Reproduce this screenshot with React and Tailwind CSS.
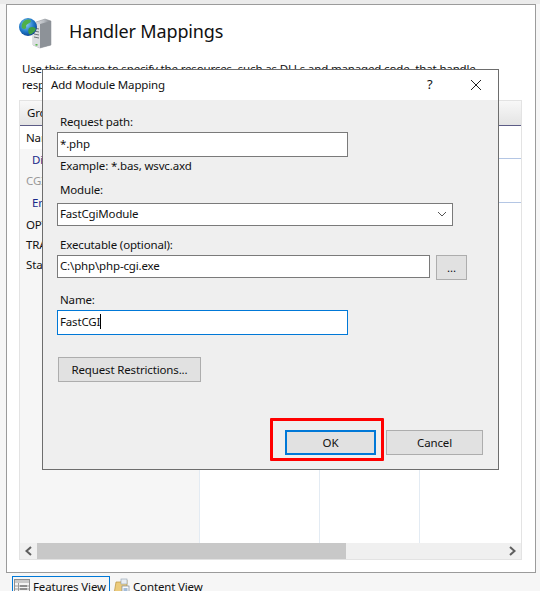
const font = { fontFamily: '"Noto Sans", sans-serif' };

function ServerGlobe() {
  return (
    <svg width="36" height="36" viewBox="0 0 36 36" className="shrink-0 -ml-[1px]">
      <defs>
        <linearGradient id="srv" x1="0" x2="1" y1="0" y2="0">
          <stop offset="0" stopColor="#e8e8ea" />
          <stop offset="0.6" stopColor="#b8bcc2" />
          <stop offset="1" stopColor="#7d8288" />
        </linearGradient>
        <radialGradient id="glb" cx="0.4" cy="0.35" r="0.7">
          <stop offset="0" stopColor="#8fd0f5" />
          <stop offset="0.6" stopColor="#1f78c8" />
          <stop offset="1" stopColor="#0c3f8a" />
        </radialGradient>
      </defs>
      <path d="M15 7 L27 3 L33 5 L33 29 L22 32 L15 29 Z" fill="url(#srv)" stroke="#8a8f95" strokeWidth="0.5" />
      <path d="M22 8 L33 5 L33 29 L22 32 Z" fill="#8d9298" />
      <path d="M15 7 L22 8 V32 L15 29 Z" fill="#dcdee2" />
      <path d="M16 12 L21 13 M16 15 L21 16 M16 18 L21 19 M16 21 L21 22" stroke="#6f7479" strokeWidth="1" />
      <rect x="17.5" y="28" width="2" height="1.6" fill="#58b848" />
      <circle cx="10" cy="11" r="9" fill="url(#glb)" />
      <path d="M5 6 C8 3 12 3 13 5 C12 8 9 7 8 10 C9 13 6 14 4 12 C3 10 4 8 5 6 Z" fill="#4fb04a" />
      <path d="M11 12 C14 10 17 11 18 13 C16 17 13 19 11 18 C10 16 10 14 11 12 Z" fill="#3f9f42" />
    </svg>
  );
}

function GridIcon() {
  return (
    <svg width="16" height="16" viewBox="0 0 16 16" className="shrink-0">
      <rect x="0.5" y="0.5" width="15" height="15" fill="#f4f4f4" stroke="#8f8f8f" />
      <rect x="1" y="1" width="14" height="3" fill="#c9c9c9" />
      <path d="M4.5 4V15M1 7H15M1 10H15M1 13H15" stroke="#9a9a9a" />
      <path d="M6 7H13M6 10H13M6 13H13" stroke="#555" />
    </svg>
  );
}

function FolderIcon() {
  return (
    <svg width="17" height="17" viewBox="0 0 17 17" className="shrink-0">
      <path d="M1 16 L3 4 H8 L9 2 H14 V16 Z" fill="#eccb7c" stroke="#b89440" strokeWidth="0.7" />
      <rect x="8" y="1" width="6" height="5" fill="#e9edf2" stroke="#8fa0b0" strokeWidth="0.6" />
      <rect x="9" y="8" width="7" height="8.5" fill="#fafafa" stroke="#7b8894" strokeWidth="0.7" />
      <path d="M10.5 11H14.5M10.5 13H14.5" stroke="#4e80b8" />
    </svg>
  );
}

function Field({ label, value, width, caret, focused }) {
  return (
    <div className="flex flex-col">
      <label className="pl-[3px] h-[17px] leading-[17px]">{label}</label>
      <div
        className={`mt-[2px] flex items-center bg-white pl-[2px] pb-[2px] ${focused ? "border border-[#0078d7]" : "border border-[#7a7a7a]"} ${width}`}
      >
        <span>{value}</span>
        {caret && <span className="inline-block w-px h-[15px] bg-black" />}
      </div>
    </div>
  );
}

function Chevron({ dir }) {
  return (
    <svg width="9" height="10" viewBox="0 0 9 10">
      <path d={dir === "l" ? "M7 1 L2.5 5 L7 9" : "M2 1 L6.5 5 L2 9"} fill="none" stroke="#5f5f5f" strokeWidth="2" />
    </svg>
  );
}

export default function App() {
  return (
    <div className="relative w-[540px] h-[591px] overflow-hidden bg-[#f6f6f6] text-[11.5px] tracking-[-0.15px] text-[#111]" style={font}>
      <div className="h-[4px] bg-[#ebebeb]" />
      <div className="ml-[6px] w-[530px] h-[569px] border border-[#9b9b9b] bg-white flex flex-col px-[12px]">
        <div className="flex items-start h-[50px] pt-[11px]">
          <ServerGlobe />
          <h1 className="ml-[15px] text-[18px] leading-[30px] font-normal tracking-[-0.15px]">Handler Mappings</h1>
        </div>
        <div className="h-[45px] pt-[6px] pl-[3px] leading-[16px] whitespace-nowrap">
          <p>Use this feature to specify the resources, such as DLLs and managed code, that handle</p>
          <p>responses to particular request types.</p>
        </div>
        <div className="w-[503px] h-[460px] border border-[#e3e3e3] flex flex-col">
          <div className="h-[25px] shrink-0 flex items-center pl-[7px] bg-gradient-to-b from-[#f8f8f8] to-[#e4e4e4] border-b border-[#5c5c86]">
            Group by
          </div>
          <div className="flex-1 flex min-h-0">
            <div className="w-[180px] bg-[#f6f6f6] border-r border-[#e3ebf3]">
              <div className="bg-white h-[23px] leading-[23px] pl-[6px]">Name</div>
              <div className="h-[21px] leading-[21px] pl-[12px] text-[#1a2a8a]">Disabled</div>
              <div className="h-[22px] leading-[22px] pl-[6px] text-[#999]">CGI-exe</div>
              <div className="h-[22px] leading-[22px] pl-[12px] text-[#1a2a8a]">Enabled</div>
              <div className="h-[21px] leading-[21px] pl-[6px]">OPTIONSVerbHandler</div>
              <div className="h-[20px] leading-[20px] pl-[6px]">TRACEVerbHandler</div>
              <div className="h-[19px] leading-[19px] pl-[6px]">StaticFile</div>
            </div>
            <div className="flex-1 flex flex-col relative">
              <div className="h-[33px] border-b border-[#b4c6e4]" />
              <div className="h-[44px] border-b border-[#b4c6e4]" />
              <div className="flex-1 flex">
                <div className="w-[120px] border-r border-[#e3ebf3]" />
                <div className="w-[100px] border-r border-[#e3ebf3]" />
              </div>
            </div>
          </div>
          <div className="h-[16px] shrink-0 flex bg-[#f0f0f0] items-center">
            <div className="w-[17px] flex justify-center"><Chevron dir="l" /></div>
            <div className="w-[309px] h-full bg-[#c8c8c8]" />
            <div className="flex-1" />
            <div className="w-[17px] flex justify-center"><Chevron dir="r" /></div>
          </div>
        </div>
      </div>
      <div className="ml-[12px] mt-[3px] flex items-start">
        <div className="w-[98px] h-[20px] border border-[#0078d7] border-b-0 flex items-center gap-[3px] pl-[1px] pt-[1px] whitespace-nowrap">
          <GridIcon />
          <span>Features View</span>
        </div>
        <div className="ml-[3px] flex items-center gap-[3px] h-[20px] pt-[1px] whitespace-nowrap">
          <FolderIcon />
          <span>Content View</span>
        </div>
      </div>

      {/* Modal dialog */}
      <div className="absolute left-[42px] top-[69px] w-[457px] h-[401px] border border-[#6d6d6d] bg-[#efefef] flex flex-col">
        <div className="h-[30px] shrink-0 bg-white flex items-center pl-[8px]">
          <span className="flex-1">Add Module Mapping</span>
          <span className="w-[12px] mr-[31px] ml-[1px] text-[13px]">?</span>
          <svg width="12" height="12" viewBox="0 0 12 12" className="mr-[16px]">
            <path d="M1 1 L11 11 M11 1 L1 11" stroke="#222" strokeWidth="1" />
          </svg>
        </div>
        <div className="flex-1 flex flex-col pl-[14px] pt-[13px]">
          <Field label="Request path:" value="*.php" width="w-[291px] h-[25px]" />
          <p className="pl-[3px] mt-[1px] h-[17px] leading-[16px]">Example: *.bas, wsvc.axd</p>
          <div className="mt-[7px] flex flex-col">
            <label className="pl-[3px] h-[17px] leading-[16px]">Module:</label>
            <div className="mt-[4px] w-[396px] h-[23px] bg-white border border-[#7a7a7a] flex items-center pl-[2px] pr-[5px] pb-[2px]">
              <span className="flex-1">FastCgiModule</span>
              <svg width="10" height="6" viewBox="0 0 10 6"><path d="M1 1 L5 5 L9 1" fill="none" stroke="#555" /></svg>
            </div>
          </div>
          <div className="mt-[10px] flex items-end gap-[6px]">
            <Field label="Executable (optional):" value="C:\php\php-cgi.exe" width="w-[373px] h-[23px]" />
            <button className="w-[31px] h-[25px] -mb-[2px] bg-[#e1e1e1] border border-[#adadad] leading-[14px]">...</button>
          </div>
          <div className="mt-[13px]">
            <Field label="Name:" value="FastCGI" width="w-[291px] h-[25px]" caret focused />
          </div>
          <button className="mt-[22px] ml-[1px] w-[143px] h-[25px] bg-[#e1e1e1] border border-[#adadad]">Request Restrictions...</button>
          <div className="mt-[48px] flex ml-[228px]">
            <div className="relative">
              <button className="w-[91px] h-[25px] bg-[#e1e1e1] border-2 border-[#0078d7]">OK</button>
              <div className="absolute left-[-15px] top-[-12px] w-[114px] h-[43px] border-[3px] border-[#ff0000] rounded-[1px]" />
            </div>
            <button className="ml-[10px] w-[97px] h-[25px] bg-[#e1e1e1] border border-[#adadad]">Cancel</button>
          </div>
        </div>
      </div>
    </div>
  );
}
